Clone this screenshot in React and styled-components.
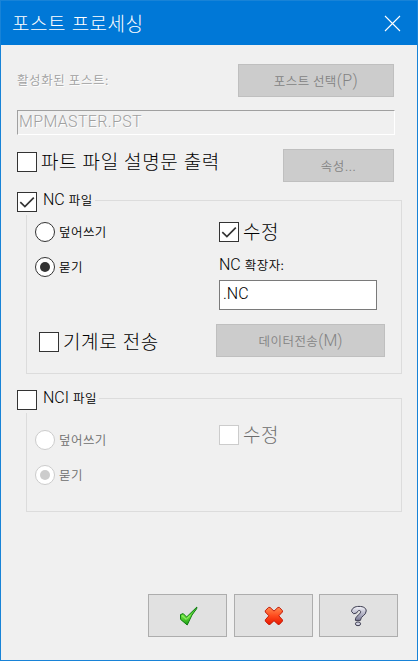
import React, { useState } from 'react';
import styled, { createGlobalStyle, css } from 'styled-components';

const GlobalStyle = createGlobalStyle`
  * {
    box-sizing: border-box;
  }
  body {
    margin: 0;
    background: #f0f0f0;
    font-family: 'Noto Sans CJK KR', sans-serif;
    font-weight: 300;
    color: #000;
  }
  button,
  input {
    font-family: inherit;
    font-weight: inherit;
    border-radius: 0;
    outline: none;
  }
`;

function CheckBox({ checked, disabled, onChange }) {
  return (
    <Box type='button' role='checkbox' aria-checked={checked} disabled={disabled} onClick={onChange}>
      {checked && (
        <svg width='18' height='18' viewBox='0 0 18 18' fill='none'>
          <path d='M2.3 9.2 L6.9 13.6 L15.8 4.6' stroke='#333' strokeWidth='1.7' />
        </svg>
      )}
    </Box>
  );
}

function RadioOption({ label, selected, disabled, onSelect }) {
  return (
    <Option $disabled={disabled} onClick={disabled ? undefined : onSelect}>
      <Radio $disabled={disabled}>{selected && <Dot $disabled={disabled} />}</Radio>
      <Small>{label}</Small>
    </Option>
  );
}

function OkIcon() {
  return (
    <svg width='20' height='20' viewBox='0 0 20 20'>
      <defs>
        <linearGradient id='ok' x1='0' y1='0' x2='0' y2='1'>
          <stop offset='0' stopColor='#35b52e' />
          <stop offset='.5' stopColor='#6be23c' />
          <stop offset='1' stopColor='#179a12' />
        </linearGradient>
      </defs>
      <path
        d='M2.5 8.6 L5.2 7.6 L8.6 11 L18.9 1 L18.6 2.8 L14 9 L9.2 19 L2.6 13.4 Z'
        fill='url(#ok)'
        stroke='#0e7d10'
        strokeLinejoin='round'
      />
      <path d='M4 9.6 L8.2 13.4 L12 9.4' fill='none' stroke='#a9f57a' strokeWidth='.9' />
    </svg>
  );
}

function CancelIcon() {
  return (
    <svg width='20' height='20' viewBox='0 0 20 20'>
      <defs>
        <linearGradient id='cancel' x1='0' y1='0' x2='0' y2='1'>
          <stop offset='0' stopColor='#ff8a50' />
          <stop offset='.5' stopColor='#ff4a1c' />
          <stop offset='1' stopColor='#e81800' />
        </linearGradient>
      </defs>
      <path
        d='M1.3 4.6 L4.6 1.4 L6 1.4 L10 5.1 L14 1.4 L15.4 1.4 L18.4 4.6 L18.4 6 L14.8 9.8 L18.4 13.8 L18.4 15.2 L15.4 18.4 L14 18.4 L10 14.7 L6 18.4 L4.6 18.4 L1.3 15.2 L1.3 13.8 L4.9 9.8 L1.3 6 Z'
        fill='url(#cancel)'
        stroke='#c41a08'
        strokeLinejoin='round'
      />
    </svg>
  );
}

function HelpIcon() {
  return (
    <svg width='18' height='22' viewBox='0 0 18 22'>
      <defs>
        <linearGradient id='help' x1='0' y1='0' x2='0' y2='1'>
          <stop offset='0' stopColor='#f4f4fa' />
          <stop offset='1' stopColor='#7c7c98' />
        </linearGradient>
      </defs>
      <path
        d='M1.5 6.4 C2 2.8 5 1.4 9 1.4 C13.5 1.4 16.2 3 16.2 6 C16.2 10.6 10.4 11 10.4 15.4 L5.4 15.4 C5 10.6 10.6 9.8 10.6 6.8 C10.6 4.8 7.6 5 6.6 8 L3.6 8.8 Z'
        fill='url(#help)'
        stroke='#3c3c50'
        strokeLinejoin='round'
      />
      <ellipse cx='8' cy='18.8' rx='2.6' ry='1.9' fill='#d0d0e0' stroke='#3c3c50' />
    </svg>
  );
}

export default function App() {
  const [description, setDescription] = useState(false);
  const [nc, setNc] = useState(true);
  const [nci, setNci] = useState(false);
  const [edit, setEdit] = useState(true);
  const [send, setSend] = useState(false);
  const [mode, setMode] = useState('ask');
  const [extension, setExtension] = useState('.NC');

  return (
    <Dialog>
      <GlobalStyle />
      <TitleBar>
        <Title>포스트 프로세싱</Title>
        <svg width='17' height='17' viewBox='0 0 17 17' stroke='#fff' strokeWidth='1.1'>
          <path d='M1 1 L16 16 M16 1 L1 16' />
        </svg>
      </TitleBar>

      <PostRow>
        <PostLabel>활성화된 포스트:</PostLabel>
        <Button $width={156} disabled>
          <Small>포스트 선택</Small>
          <Latin $spacing={0.4}>(P)</Latin>
        </Button>
      </PostRow>
      <PostName>
        <Latin $spacing={0.35}>MPMASTER.PST</Latin>
      </PostName>

      <DescriptionRow>
        <CheckBox checked={description} onChange={() => setDescription(!description)} />
        <Large>파트 파일 설명문 출력</Large>
        <Button $width={111} disabled>
          <Small>속성</Small>
          <Latin>...</Latin>
        </Button>
      </DescriptionRow>

      <GroupHeader>
        <CheckBox checked={nc} onChange={() => setNc(!nc)} />
        <Legend>
          <Latin>NC</Latin>
          <Small>파일</Small>
        </Legend>
        <GroupEdge />
      </GroupHeader>
      <GroupBody $height={159}>
        <Columns>
          <RadioList>
            <RadioOption label='덮어쓰기' selected={mode === 'overwrite'} onSelect={() => setMode('overwrite')} />
            <RadioOption label='묻기' selected={mode === 'ask'} onSelect={() => setMode('ask')} />
          </RadioList>
          <div>
            <CheckRow>
              <CheckBox checked={edit} onChange={() => setEdit(!edit)} />
              <Large>수정</Large>
            </CheckRow>
            <ExtensionLabel>
              <Latin>NC</Latin>
              <Small>확장자:</Small>
            </ExtensionLabel>
            <ExtensionInput value={extension} onChange={(e) => setExtension(e.target.value)} />
          </div>
        </Columns>
        <SendRow>
          <SendOption>
            <CheckBox checked={send} onChange={() => setSend(!send)} />
            <Large>기계로 전송</Large>
          </SendOption>
          <Button $width={169} disabled>
            <Small>데이터전송</Small>
            <Latin>(M)</Latin>
          </Button>
        </SendRow>
      </GroupBody>

      <GroupHeader $second>
        <CheckBox checked={nci} onChange={() => setNci(!nci)} />
        <Legend>
          <Latin>NCI</Latin>
          <Small>파일</Small>
        </Legend>
        <GroupEdge />
      </GroupHeader>
      <GroupBody $height={99}>
        <Columns>
          <RadioList $second>
            <RadioOption label='덮어쓰기' disabled />
            <RadioOption label='묻기' selected disabled />
          </RadioList>
          <CheckRow $second>
            <CheckBox disabled />
            <Large>수정</Large>
          </CheckRow>
        </Columns>
      </GroupBody>

      <Footer>
        <ActionButton aria-label='확인'>
          <OkIcon />
        </ActionButton>
        <ActionButton aria-label='취소'>
          <CancelIcon />
        </ActionButton>
        <ActionButton aria-label='도움말'>
          <HelpIcon />
        </ActionButton>
      </Footer>
    </Dialog>
  );
}

const Dialog = styled.div`
  width: 418px;
  height: 661px;
  display: flex;
  flex-direction: column;
  border: 1px solid #1883d7;
  background: #f0f0f0;
  overflow: hidden;
`;

const TitleBar = styled.div`
  height: 44px;
  flex: none;
  display: flex;
  align-items: center;
  justify-content: space-between;
  padding: 0 16px 0 11px;
  background: #0078d7;
`;

const Title = styled.span`
  color: #fff;
  font-size: 19px;
  line-height: 24px;
  letter-spacing: 0.5px;
  word-spacing: 1px;
  white-space: nowrap;
`;

const Small = styled.span`
  font-size: 12.5px;
  line-height: 18px;
  letter-spacing: 0.45px;
  font-weight: 350;
  white-space: nowrap;
`;

const Large = styled.span`
  font-size: 19px;
  line-height: 18px;
  letter-spacing: 0.6px;
  word-spacing: 0.6px;
  margin-left: 4px;
  white-space: nowrap;
`;

const Latin = styled.span`
  font-family: Roboto, sans-serif;
  font-size: 16px;
  line-height: 18px;
  letter-spacing: ${({ $spacing }) => $spacing || 0}px;
`;

const etched = css`
  color: #a0a0a0;
  text-shadow: 1px 1px 0 #fff;
`;

const Button = styled.button`
  width: ${({ $width }) => $width}px;
  height: 33px;
  flex: none;
  display: flex;
  align-items: center;
  justify-content: center;
  margin-left: auto;
  padding: 0;
  border: 1px solid #bfbfbf;
  background: #ccc;
  color: #838383;
`;

const PostRow = styled.div`
  display: flex;
  align-items: center;
  padding: 0 23px 0 16px;
  margin-top: 19px;
`;

const PostLabel = styled(Small)`
  margin-bottom: 1px;
  letter-spacing: 0.6px;
  ${etched}
`;

const PostName = styled.div`
  height: 25px;
  display: flex;
  align-items: center;
  margin: 13px 22px 0 16px;
  padding: 0 1px 2px;
  border: 1px solid;
  border-color: #a0a0a0 #fff #fff #a0a0a0;
  ${etched}
`;

const DescriptionRow = styled.div`
  display: flex;
  align-items: flex-start;
  padding: 3px 23px 0 16px;
  margin-top: 14px;
  height: 36px;
  button:last-child {
    margin-top: -3px;
  }
`;

const GroupHeader = styled.div`
  height: 23px;
  flex: none;
  display: flex;
  margin-top: ${({ $second }) => ($second ? 16 : 7)}px;
  padding: 0 15px 0 16px;
`;

const Legend = styled.div`
  display: flex;
  align-items: center;
  gap: 4px;
  height: 18px;
  margin: -1px 2px 0 6px;
`;

const GroupEdge = styled.div`
  flex: 1;
  height: 15px;
  align-self: flex-end;
  border: solid #dcdcdc;
  border-width: 1px 1px 0 0;
`;

const GroupBody = styled.div`
  height: ${({ $height }) => $height}px;
  flex: none;
  margin: 0 15px 0 25px;
  padding-left: 8px;
  border: 1px solid #dcdcdc;
  border-top: 0;
`;

const Columns = styled.div`
  display: grid;
  grid-template-columns: 184px 1fr;
`;

const RadioList = styled.div`
  display: flex;
  flex-direction: column;
  gap: 15px;
  padding-top: ${({ $second }) => ($second ? 17 : 7)}px;
`;

const Option = styled.div`
  display: flex;
  align-items: center;
  gap: 4px;
  height: 20px;
  color: ${({ $disabled }) => ($disabled ? '#6d6d6d' : '#000')};
`;

const Radio = styled.span`
  width: 20px;
  height: 20px;
  display: flex;
  align-items: center;
  justify-content: center;
  border: 1px solid ${({ $disabled }) => ($disabled ? '#ccc' : '#333')};
  border-radius: 50%;
  background: #fff;
`;

const Dot = styled.span`
  width: 10px;
  height: 10px;
  border-radius: 50%;
  background: ${({ $disabled }) => ($disabled ? '#ccc' : '#333')};
`;

const Box = styled.button`
  width: 20px;
  height: 20px;
  flex: none;
  padding: 0;
  border: 1px solid #333;
  background: #fff;
  svg {
    display: block;
  }
  &:disabled {
    border-color: #ccc;
  }
  &:disabled + span {
    color: #6d6d6d;
  }
`;

const CheckRow = styled.div`
  display: flex;
  height: 20px;
  margin-top: ${({ $second }) => ($second ? 12 : 7)}px;
`;

const ExtensionLabel = styled.div`
  display: flex;
  align-items: center;
  gap: 4px;
  height: 18px;
  margin-top: 14px;
`;

const ExtensionInput = styled.input`
  display: block;
  width: 158px;
  height: 30px;
  margin-top: 6px;
  padding: 0 3px 4px;
  border: 1px solid #7a7a7a;
  background: #fff;
  font-family: Roboto, sans-serif;
  font-size: 16px;
`;

const SendRow = styled.div`
  display: flex;
  height: 33px;
  margin-top: 14px;
  padding: 0 16px 0 4px;
`;

const SendOption = styled.div`
  display: flex;
  align-items: flex-start;
  padding-top: 8px;
`;

const Footer = styled.div`
  display: flex;
  justify-content: flex-end;
  gap: 7px;
  margin-top: auto;
  padding: 0 19px 23px 0;
`;

const ActionButton = styled.button`
  width: 79px;
  height: 43px;
  display: flex;
  align-items: center;
  justify-content: center;
  padding: 0;
  border: 1px solid #adadad;
  background: #e1e1e1;
  &:last-child {
    margin-left: -1px;
  }
`;
